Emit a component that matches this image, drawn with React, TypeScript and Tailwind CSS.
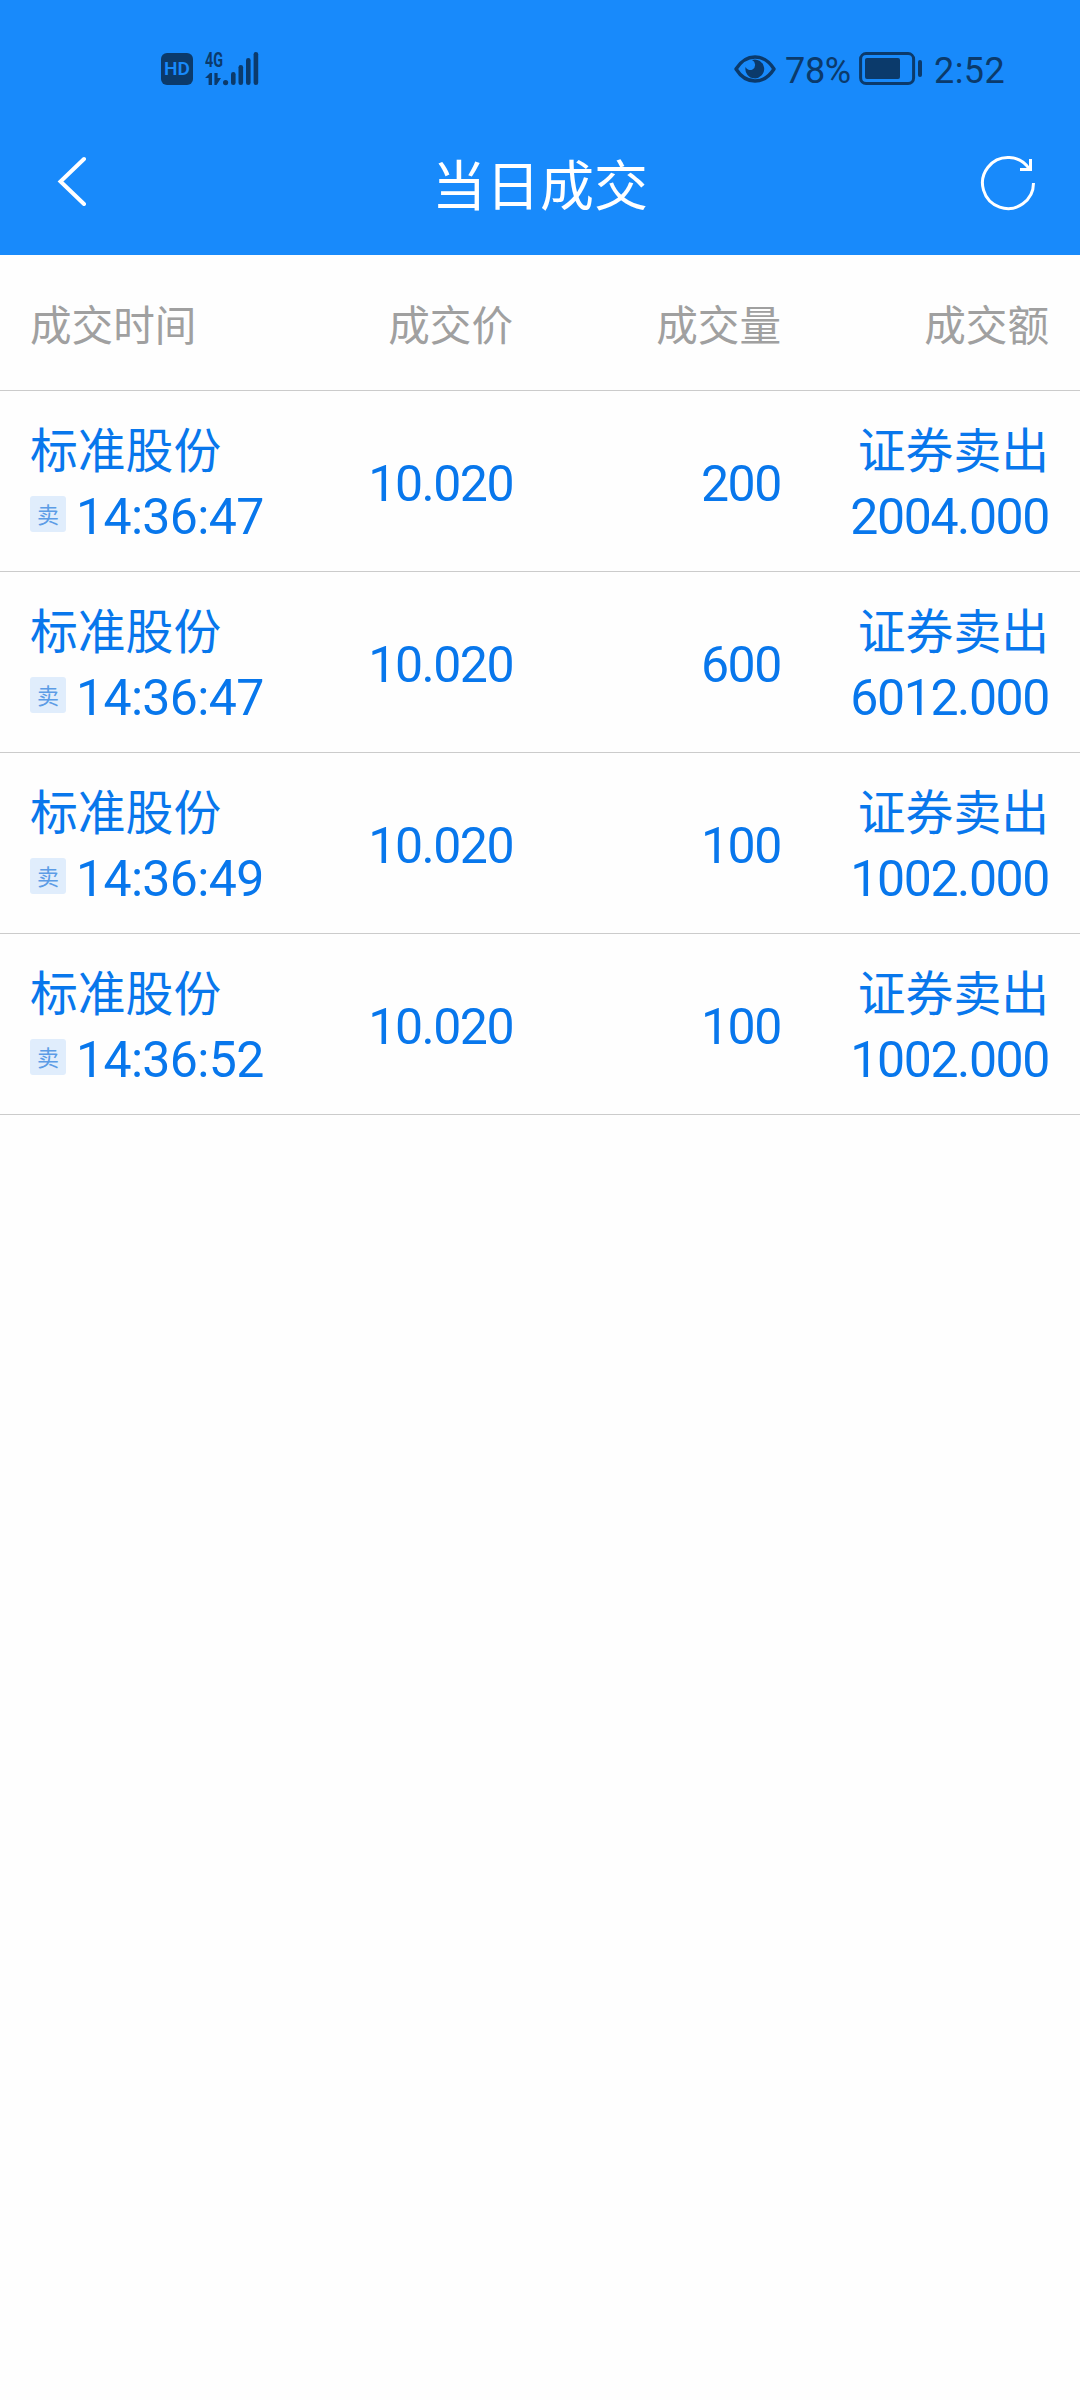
import React from "react";

interface Deal {
  name: string;
  time: string;
  price: string;
  amount: string;
  type: string;
  total: string;
}

const deals: Deal[] = [
  { name: "标准股份", time: "14:36:47", price: "10.020", amount: "200", type: "证券卖出", total: "2004.000" },
  { name: "标准股份", time: "14:36:47", price: "10.020", amount: "600", type: "证券卖出", total: "6012.000" },
  { name: "标准股份", time: "14:36:49", price: "10.020", amount: "100", type: "证券卖出", total: "1002.000" },
  { name: "标准股份", time: "14:36:52", price: "10.020", amount: "100", type: "证券卖出", total: "1002.000" },
];

const SignalIcon = () => (
  <svg width="54" height="48" viewBox="0 -6 54 48" fill="#0b3a6b" className="font-['Roboto',sans-serif]">
    <text x="0" y="15.5" fontSize="20" fontWeight="700" textLength="18" lengthAdjust="spacingAndGlyphs">
      4G
    </text>
    <path d="M0 27 L5 22 H7 V34 H3.6 V27 Z" />
    <path d="M9.4 22 H12.6 V27 H16 L11.5 34 H9.4 Z" />
    <circle cx="20.6" cy="31.6" r="2.6" />
    <rect x="26" y="21" width="4.6" height="13" rx="2.3" />
    <rect x="33.5" y="14" width="4.6" height="20" rx="2.3" />
    <rect x="41" y="7" width="4.6" height="27" rx="2.3" />
    <rect x="48.6" y="1" width="4.6" height="33" rx="2.3" />
  </svg>
);

const EyeIcon = () => (
  <svg width="42" height="28" viewBox="0 0 42 28" fill="none">
    <path
      d="M2 14 C7 6 14 2 21 2 C28 2 35 6 40 14 C35 22 28 26 21 26 C14 26 7 22 2 14 Z"
      stroke="#0b3a6b"
      strokeWidth="3.4"
      strokeLinejoin="round"
    />
    <path d="M18 5 A9.4 9.4 0 1 1 11.6 12 A5.2 5.2 0 0 0 18.5 14.5 A5.4 5.4 0 0 0 18 5 Z" fill="#0b3a6b" />
  </svg>
);

const BatteryIcon = () => (
  <svg width="64" height="34" viewBox="0 0 64 34" fill="none">
    <rect x="1.6" y="1.6" width="53" height="30" rx="5.5" stroke="#0b3a6b" strokeWidth="3" />
    <rect x="6" y="6" width="35" height="21" rx="2" fill="#0b3a6b" />
    <rect x="59" y="8" width="4" height="17" rx="2" fill="#0b3a6b" />
  </svg>
);

const StatusBar = () => (
  <div className="flex h-[137px] items-center pl-[161px] pr-[76px] font-['Roboto',sans-serif] text-[#0b3a6b]">
    <div className="flex h-8 w-8 items-center justify-center rounded-[6px] bg-[#0b3a6b] pt-[2px] text-[19px] font-semibold text-[#188afb]">
      HD
    </div>
    <div className="ml-[12px]">
      <SignalIcon />
    </div>
    <div className="ml-auto flex items-center">
      <EyeIcon />
      <span className="ml-[9px] w-[67px] whitespace-nowrap pt-[4px] text-[36px] tracking-[-0.3px]">78%</span>
      <span className="ml-[7px]">
        <BatteryIcon />
      </span>
      <span className="ml-[11px] w-[70px] whitespace-nowrap pt-[4px] text-[36px] tracking-[0.4px]">2:52</span>
    </div>
  </div>
);

const NavBar = () => (
  <div className="flex h-[118px] items-center justify-between pl-[57px] pr-[43px] text-white">
    <button type="button" className="w-[44px] pb-[31px]">
      <svg width="32" height="50" viewBox="0 0 32 50" fill="none" stroke="white" strokeWidth="4" strokeLinecap="round">
        <path d="M27 3 L3.5 25.5 L27 48" />
      </svg>
    </button>
    <h1 className="pb-[26px] text-[54px] leading-[80px]">当日成交</h1>
    <button type="button" className="pb-[27px]">
      <svg width="58" height="58" viewBox="0 0 58 58" fill="none" stroke="white" strokeWidth="3">
        <path d="M54.5 29 A25.5 25.5 0 1 1 50.5 15.3" />
        <path d="M41 15.5 H51.5 V5" />
      </svg>
    </button>
  </div>
);

const Num = ({ children }: { children: React.ReactNode }) => (
  <div className="whitespace-nowrap pt-[6px] font-['Roboto',sans-serif] text-[50px] leading-[60px]">{children}</div>
);

const DealRow = ({ deal }: { deal: Deal }) => (
  <div className="grid h-[181px] grid-cols-[216px_268px_268px_268px] items-center border-b border-[#cbcbcb] px-[30px] text-[47.8px] leading-[66px] text-[#0877ec]">
    <div>
      <div>{deal.name}</div>
      <div className="flex items-center">
        <span className="mr-[10px] flex h-9 w-9 shrink-0 items-center justify-center rounded-[3px] bg-[#e0edfc] pb-[2px] text-[22px] leading-none text-[#5c9ce6]">
          卖
        </span>
        <div className="tracking-[-0.65px]">
          <Num>{deal.time}</Num>
        </div>
      </div>
    </div>
    <div className="pr-[1px] text-right tracking-[-1.5px]">
      <Num>{deal.price}</Num>
    </div>
    <div className="pr-[1px] text-right tracking-[-1.4px]">
      <Num>{deal.amount}</Num>
    </div>
    <div className="pr-[1px] text-right">
      <div>{deal.type}</div>
      <div className="tracking-[-1.4px]">
        <Num>{deal.total}</Num>
      </div>
    </div>
  </div>
);

const App: React.FC = () => {
  return (
    <div className="min-h-[2400px] w-[1080px] bg-[#fefefe] font-['Noto_Sans_CJK_SC',sans-serif]">
      <header className="bg-[#188afb]">
        <StatusBar />
        <NavBar />
      </header>
      <div className="grid h-[136px] grid-cols-[216px_268px_268px_268px] items-center border-b border-[#cbcbcb] px-[30px] pt-[2px] text-[41.6px] text-[#a0a0a0]">
        <div>成交时间</div>
        <div className="pr-[1px] text-right">成交价</div>
        <div className="pr-[1px] text-right">成交量</div>
        <div className="pr-[1px] text-right">成交额</div>
      </div>
      {deals.map((deal, index) => (
        <DealRow key={index} deal={deal} />
      ))}
    </div>
  );
};

export default App;
